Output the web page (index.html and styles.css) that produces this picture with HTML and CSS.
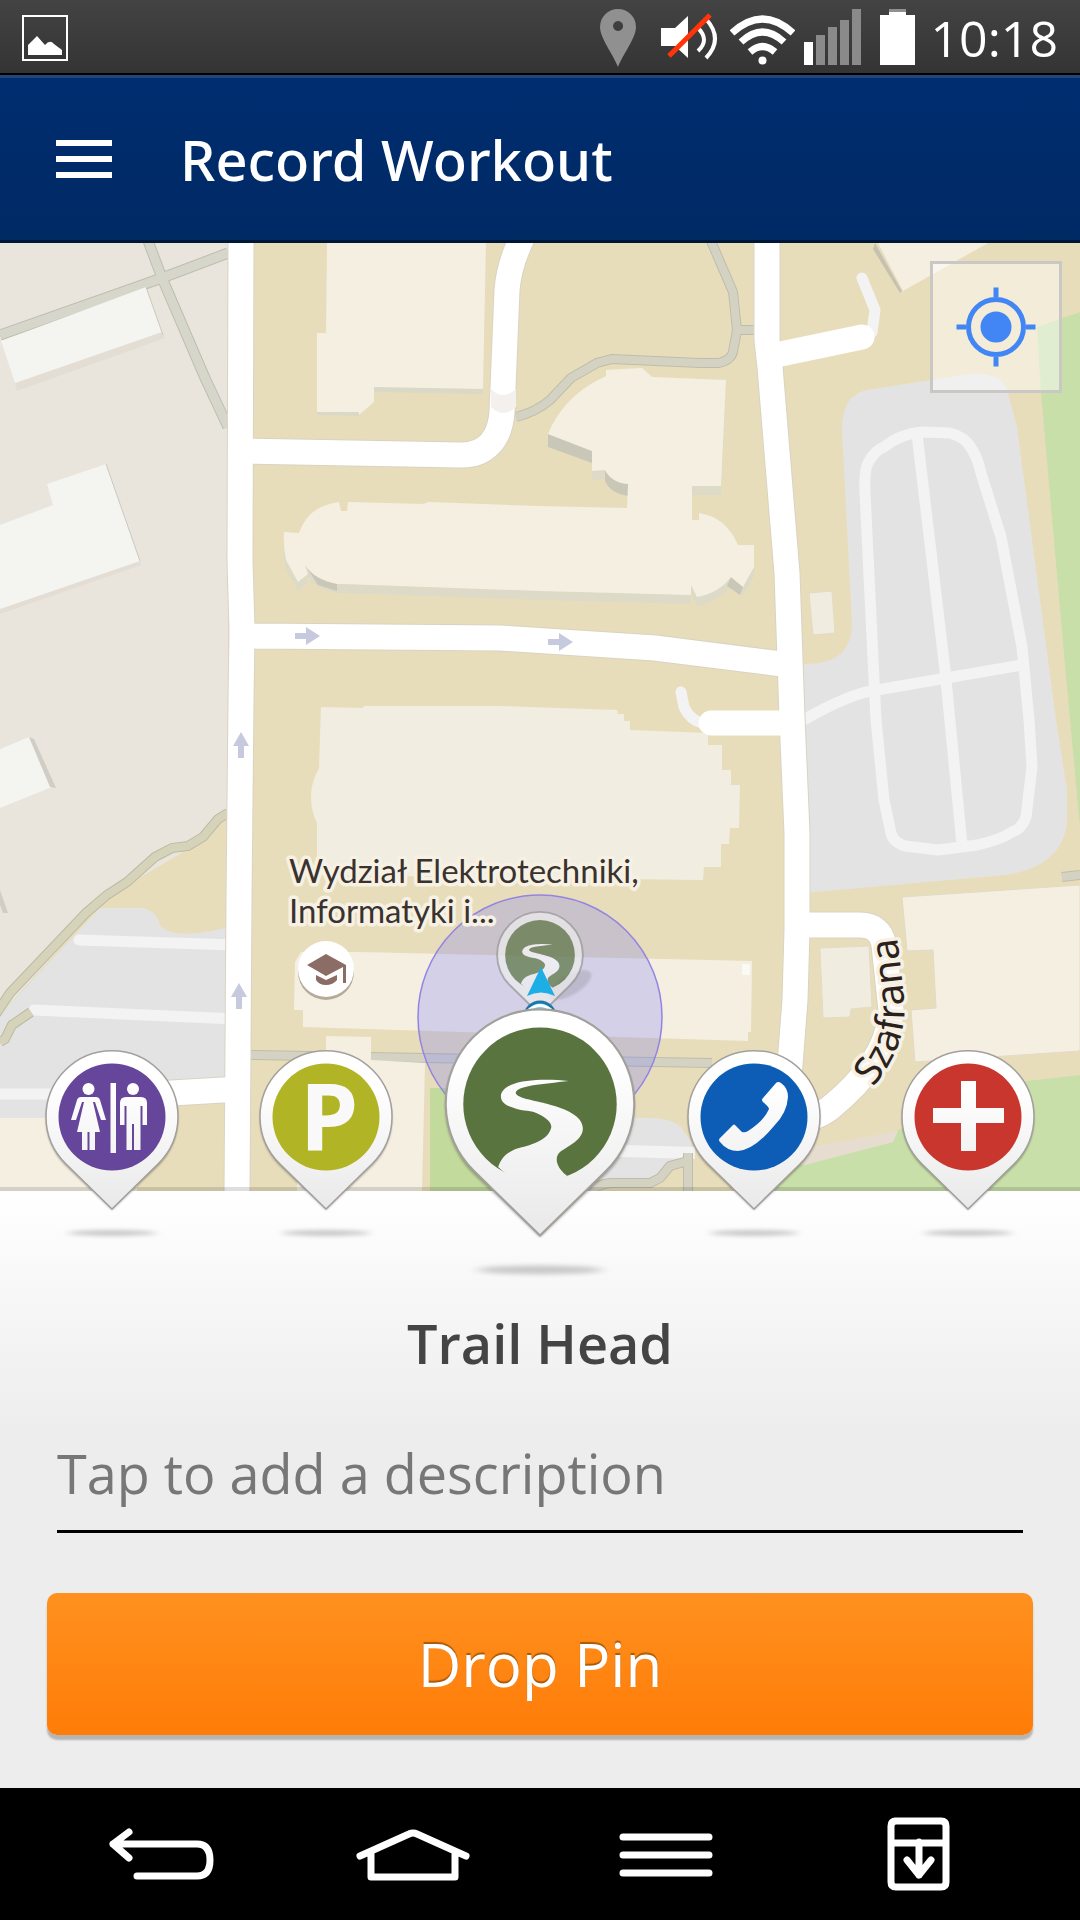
FILE: index.html
```html
<!DOCTYPE html>
<html lang="en">
<head>
<meta charset="utf-8">
<meta name="viewport" content="width=device-width, initial-scale=1">
<title>Record Workout</title>
<link rel="stylesheet" href="styles.css">
</head>
<body>
<div class="status-bar">
  <svg class="status-icon" width="46" height="75" viewBox="22 0 46 75" aria-hidden="true">
    <rect x="23" y="16" width="44" height="44" fill="none" stroke="#fff" stroke-width="2"/>
    <path d="M28 55V45l9-9 8 9q5-6 9-1l8 6v5z" fill="#fff"/>
  </svg>
  <div class="status-right">
    <svg class="status-icon" width="52" height="75" viewBox="600 0 52 75" aria-hidden="true">
      <path fill-rule="evenodd" fill="#909090" d="M618 9a18 18 0 0 1 18 18c0 11-13 27-18 40c-5-13-18-29-18-40a18 18 0 0 1 18-18zm0 12a5 5 0 1 0 .1 0z"/>
    </svg>
    <svg class="status-icon" width="60" height="75" viewBox="661 0 60 75" aria-hidden="true">
      <path d="M661 28h14l13-12v42l-13-12h-14z" fill="#fff"/>
      <path d="M698 28q12 12 0 23M706 19q18 20 0 39" fill="none" stroke="#fff" stroke-width="4"/>
      <path d="M669 56l41-41" stroke="#ff3408" stroke-width="5"/>
    </svg>
    <svg class="status-icon" width="65" height="75" viewBox="730 0 65 75" aria-hidden="true">
      <g fill="none" stroke="#fff" stroke-width="7">
        <path d="M732 33q30.500-28 61 0M741 42q21.500-20 43 0M750 52q12.500-11 25 0"/>
      </g>
      <circle cx="762.500" cy="60.500" r="4" fill="#fff"/>
    </svg>
    <svg class="status-icon" width="67" height="75" viewBox="804 0 67 75" aria-hidden="true">
      <path d="M804 42h9v23h-9z" fill="#fff"/>
      <path d="M816 35h9v30h-9zM828 27h9v38h-9zM840 20h9v45h-9zM852 9h9v56h-9z" fill="#8a8a8a"/>
    </svg>
    <svg class="status-icon" width="42" height="75" viewBox="880 0 42 75" aria-hidden="true">
      <path d="M889 9h17v4h-17z" fill="#909090"/>
      <path d="M880 15h9v-3h17v3h9v50h-35z" fill="#fff"/>
    </svg>
    <span class="clock">10:18</span>
  </div>
</div>

<header class="app-bar">
  <button class="menu-button" type="button" aria-label="Open menu">
    <svg width="56" height="38" viewBox="0 0 56 38" aria-hidden="true"><path d="M0 0h56v6H0zM0 16h56v6H0zM0 32h56v6H0z" fill="#fff"/></svg>
  </button>
  <h1 class="app-title">Record Workout</h1>
</header>

<main class="content">
  <section class="map" aria-label="Map">
    <svg class="map-canvas" viewBox="0 243 1080 948" preserveAspectRatio="xMidYMid slice">
      <defs>
        <linearGradient id="pinFill" gradientUnits="userSpaceOnUse" x1="0" y1="-30" x2="0" y2="92">
          <stop offset="0" stop-color="#fff"/><stop offset="1" stop-color="#e9e9e9"/>
        </linearGradient>
        <filter id="soft" x="-30%" y="-200%" width="160%" height="500%"><feGaussianBlur stdDeviation="5 2"/></filter>
        <filter id="edge" x="-20%" y="-20%" width="140%" height="140%"><feGaussianBlur stdDeviation="1"/></filter>
        <symbol id="pin" viewBox="-70 -70 140 200">
          <path d="M-47 48A66 66 0 1 1 47 48L0 93z" fill="#000" opacity=".35" filter="url(#edge)"/>
          <path d="M-46 47A66 66 0 1 1 46 47L0 92z" fill="url(#pinFill)" stroke="#a3a09c" stroke-width="1.500"/>
        </symbol>
        <g id="trail">
          <circle r="53.700" fill="#5a7440"/>
          <path fill="url(#pinFill)" d="M20-16.200C5-18-12-17-19-14C-30-10-30-1-20 2C-14 5-8 4-3 6C4 9 9 13 7.700 17C5 26-8 29-16 31C-24 34-27 38-29.300 44L0 70L18.800 50C11 44 10 37 14 33.500C20 29 30 25 30 17C30 8 17 3 7 .4C0-2-17-4-17-8C-16-13 2-14 20-16.200z"/>
        </g>
        <path id="hall" d="M606 370L642 368L652 377L726 380L721 486H692V520H699V513Q726 517 738 545H754V567L743 587L731 577Q719 593 697 597L691 585V595L540 591L344 584H337Q315 580 305 565L308 574L298 582L286 560Q283 545 284 532L299 533Q308 506 339 502L341 511H347L348 502L424 504L428 502L456 503L538 506L627 508L628 484Q612 483 605 470L592 471V451L548 434Q564 395 606 376z"/>
      </defs>

      <rect y="243" width="1080" height="948" fill="#e8ddbb"/>
      <path d="M0 243H228V815L190 848L105 898L0 1015z" fill="#e9e5dd"/>

      <!-- campus paths, upper left -->
      <g fill="none" stroke="#bdbdb0" stroke-width="11"><path d="M0 335L162 278L228 253M147 238L162 278L205 378L228 427"/></g>
      <g fill="none" stroke="#d6d6cb" stroke-width="9"><path d="M0 335L162 278L228 253M147 238L162 278L205 378L228 427"/></g>
      <path d="M15 383L162 332L165 338L17 391zM0 609L140 561L141 565L0 614z" fill="#e3ddd3"/>
      <path d="M1 341L146 287L162 332L15 383zM0 525L53 505L47 484L106 464L140 561L0 609zM0 749L29 737L52 787L0 808z" fill="#f4f4f0"/>
      <path d="M106 464L140 561M146 287L163 335" stroke="#cbc8c0" fill="none"/>
      <path d="M29 737L34 739L56 788L50 787zM0 890L8 913H3L0 905z" fill="#d0cdc5"/>

      <!-- car park, lower left -->
      <path d="M100 908L142 908Q156 910 160 925Q172 941 225 928V1077L225 1118H0V1015z" fill="#e3e3e3"/>
      <path d="M0 1118H137V1191H0z" fill="#f5efe2"/>
      <path d="M137 1100H225V1191H137z" fill="#e8ddbb"/>
      <g fill="none" stroke="#f3f3f3" stroke-width="11" stroke-linecap="round"><path d="M79 940L235 945M34 1010L235 1019M0 1094H90"/></g>
      <g fill="none" stroke="#bdbaa0" stroke-width="10"><path d="M228 813L218 819L203 837L188 846L172 848L155 857L127 882L107 895L86 913L10 993L-4 1014M31 1012L12 1025L5 1039L0 1042"/></g>
      <g fill="none" stroke="#d6d3bb" stroke-width="8"><path d="M228 813L218 819L203 837L188 846L172 848L155 857L127 882L107 895L86 913L10 993L-4 1014M31 1012L12 1025L5 1039L0 1042"/></g>

      <!-- right hand side areas -->
      <path d="M1080 312L1037 327L1041 393L1063 643L1070 720L1080 827zM1080 1075L1000 1084L898 1130L893 1142L800 1165L740 1191H1080z" fill="#c9dfa9"/>
      <path d="M812 1147L898 1131L893 1142L805 1165L790 1163z" fill="#e6ddd0"/>
      <path d="M804 664Q852 665 852 623L842 430Q842 395 867 390L970 374Q1003 372 1008 393L1017 427L1056 720L1067 790V823Q1062 867 1005 875L804 893z" fill="#e3e3e3"/>
      <g fill="none" stroke="#f3f3f3" stroke-width="11" stroke-linejoin="round">
        <path d="M876 720L865 493Q864 470 868 463Q875 450 884 447Q900 434 922 432L950 433Q964 437 969 445Q977 455 981 473L1001 537L1022 647L1029 720L1032 767L1026 817Q1022 829 1012 832Q1000 840 977 845L938 850L905 846Q893 842 891 833L884 800zM917 434L945 670L962 845M1022 665L877 690Q850 693 800 722"/>
      </g>
      <path d="M430 1088H500V1191H430z" fill="#c2da9b"/>
      <path d="M600 1120Q670 1113 681 1127L692 1143V1160L678 1162L660 1177L600 1182z" fill="#e3e3e3"/>
      <path d="M590 1150L695 1153" stroke="#f3f3f3" stroke-width="12"/>
      <g fill="none" stroke="#bfbda9" stroke-width="10"><path d="M588 1193Q595 1185 610 1183H650L660 1178L670 1166L688 1161M688 1153V1191M516 417Q536 412 550 400L571 378L597 363L612 359L700 363L719 363Q731 360 733 352L737 330L733 292L711 241M737 330H757M251 1055L712 1063M1062 877L1080 875"/></g>
      <g fill="none" stroke="#d4d3c3" stroke-width="8"><path d="M588 1193Q595 1185 610 1183H650L660 1178L670 1166L688 1161M688 1153V1191M516 417Q536 412 550 400L571 378L597 363L612 359L700 363L719 363Q731 360 733 352L737 330L733 292L711 241M737 330H757M251 1055L712 1063M1062 877L1080 875"/></g>

      <!-- buildings -->
      <path d="M327 243H486L483 394L374 392L359 416L317 415V333H326z" fill="#dad8c7"/>
      <path d="M327 243H486L483 389L374 387V402L359 415V412H317V333H326z" fill="#f5efe2"/>
      <use href="#hall" y="9" fill="#dddac8"/>
      <path d="M548 434L592 451V463L548 447zM605 470Q612 483 628 484V496Q610 493 605 481zM305 565Q315 580 337 583V591L318 585zM731 577L743 587L740 595L727 586z" fill="#c9c7b8"/>
      <use href="#hall" fill="#f5efe2"/>
      <path d="M875 243L902 291L900 293L873 249z" fill="#c6c2b1"/>
      <path d="M878 243H988L903 291z" fill="#f5efe2"/>
      <path d="M809 593L832 591L835 633L813 635zM820 948L869 946L872 1007L851 1009L850 1017L823 1018z" fill="#f0ecdf" stroke="#e3dbc4" stroke-width="1"/>
      <path d="M321 707L363 708L364 706L500 706L617 710L618 714H624V721H630V730L708 733V745H722V770H731V785H740L739 828H730L729 844H721V867H704L703 880L317 875V823Q304 795 319 768z" fill="#f1ede0"/>
      <path d="M301 952H358L752 961L751 1032H748V1041L303 1027V1010H294L295 962zM326 1036L371 1037V1060L425 1063L422 1191H297V1060H326z" fill="#f5efe2"/>
      <path d="M742 964h8v11h-8z" fill="#fbf9f3"/>
      <path d="M902 897L1080 885V1051L915 1062L911 1010L936 1008L933 950L907 951z" fill="#f5efe2" stroke="#e2dac6"/>

      <!-- roads -->
      <g fill="none" stroke="#f3f3f3" stroke-width="11" stroke-linecap="round" stroke-linejoin="round"><path d="M862 278L875 310L872 332M681 692L684 707Q690 720 702 723"/></g>
      <g fill="none" stroke="#d9d3c2" stroke-width="27"><path d="M241 241L240 560L242 630L241 700L239 900L237 1193M240 451L460 455C485 456 500 440 502 412L507 290Q509 265 522 238M240 636L500 638L655 648L790 665M767 241V340L770 367L787 573L792 717L797 833V930L795 1000L788 1090M797 925H860Q880 925 884 945L891 1010Q889 1060 830 1108Q815 1120 780 1125M240 1089L120 1096"/></g>
      <g fill="none" stroke="#fff" stroke-width="25">
        <path stroke-linecap="round" d="M776 355L862 337M711 723H790"/>
        <path d="M241 241L240 560L242 630L241 700L239 900L237 1193M240 451L460 455C485 456 500 440 502 412L507 290Q509 265 522 238M240 636L500 638L655 648L790 665M767 241V340L770 367L787 573L792 717L797 833V930L795 1000L788 1090M797 925H860Q880 925 884 945L891 1010Q889 1060 830 1108Q815 1120 780 1125M240 1089L120 1096"/>
      </g>
      <path d="M491 389Q503 401 516 389V407Q503 419 491 407z" fill="#f4f0ed"/>
      <g fill="#c7c9de">
        <path id="lane" d="M295 633h11v-6l14 9l-14 9v-6h-11z"/>
        <use href="#lane" x="253" y="6"/>
        <path id="lane-up" d="M238 758v-12h-5l8-14l8 14h-5v12z"/>
        <use href="#lane-up" x="-2" y="251"/>
      </g>

      <!-- point of interest -->
      <circle cx="326" cy="972" r="28" fill="#b5ab98"/>
      <circle cx="326" cy="969" r="28" fill="#fff"/>
      <path d="M326 954l20 11v18h-3v-16l-17 9l-19-11zM316 975l10 5l11-5v5q-4 5-11 5t-10-5z" fill="#8c6d66"/>

      <!-- current position -->
      <circle cx="540" cy="1017" r="122" fill="#7173fa" fill-opacity=".25" stroke="#9384e2" stroke-width="1.500"/>
      <g class="map-label">
        <text x="289" y="883">Wydział Elektrotechniki,</text>
        <text x="289" y="923">Informatyki i...</text>
      </g>
      <ellipse cx="570" cy="985" rx="24" ry="10" transform="rotate(-30 570 985)" fill="#777" opacity=".25" filter="url(#edge)"/>
      <g transform="translate(540 955) scale(.65)" opacity=".7">
        <path d="M-46 47A66 66 0 1 1 46 47L0 92z" fill="#eee" stroke="#999" stroke-width="3"/>
        <use href="#trail"/>
      </g>
      <circle cx="540" cy="1017" r="15" fill="#6fd0ee" stroke="#1c78a8" stroke-width="3"/>
      <path d="M529 1010q11-9 22 0" fill="none" stroke="#fff" stroke-width="3"/>
      <path d="M541 967L555 996Q541 989 527 996z" fill="#1eaee6"/>

      <path id="szafrana" d="M873 1087Q908 1045 904 1000Q901 965 893 910" fill="none"/>
      <text class="street-label"><textPath href="#szafrana">Szafrana</textPath></text>
      <path d="M0 1189H1080" stroke="#000" stroke-opacity=".13" stroke-width="4"/>
    </svg>
    <button class="locate-button" type="button" aria-label="My location">
      <svg width="80" height="80" viewBox="-40 -40 80 80" aria-hidden="true">
        <circle r="15.500" fill="#4285f4"/>
        <circle r="27.500" fill="none" stroke="#4285f4" stroke-width="5"/>
        <path d="M0-39.500V-30M0 30V39.500M-39.500 0H-30M30 0H39.500" stroke="#4285f4" stroke-width="5"/>
      </svg>
    </button>
  </section>

  <form class="pin-form">
    <div class="pin-picker" role="group" aria-label="Pin type">
      <button class="pin-option" type="button" aria-label="Restroom">
        <svg class="pin-art" viewBox="-70 -70 140 200" aria-hidden="true">
          <ellipse cy="116" rx="44" ry="3" fill="#000" opacity=".2" filter="url(#soft)"/>
          <use href="#pin" x="-70" y="-70" width="140" height="200"/>
          <circle r="53.500" fill="#65469a"/>
          <g fill="url(#pinFill)">
            <circle cx="-23.500" cy="-28" r="6"/>
            <path d="M-31-20H-16Q-13-20-12-17L-6 3H-11L-17-15H-19L-12 15H-17V33H-22.500V15H-24.500V33H-30V15H-35L-28-15H-30L-36 3H-41L-35-17Q-34-20-31-20z"/>
            <path d="M-1.500-34H4V36H-1.500z"/>
            <circle cx="21" cy="-28" r="6"/>
            <path d="M14-20H29Q35-20 35-14V8H30.500V-11H28.500V33H22V7H20V33H14.500V-11H12.500V8H8V-14Q8-20 14-20z"/>
          </g>
        </svg>
      </button>
      <button class="pin-option" type="button" aria-label="Parking">
        <svg class="pin-art" viewBox="-70 -70 140 200">
          <ellipse cy="116" rx="44" ry="3" fill="#000" opacity=".2" filter="url(#soft)"/>
          <use href="#pin" x="-70" y="-70" width="140" height="200"/>
          <circle r="53.500" fill="#b1b424"/>
          <text class="parking-letter" x="3" y="34">P</text>
        </svg>
      </button>
      <button class="pin-option pin-option-selected" type="button" aria-label="Trail Head" aria-pressed="true">
        <svg class="pin-art" viewBox="-70 -70 140 200" aria-hidden="true">
          <ellipse cy="116" rx="44" ry="3" fill="#000" opacity=".2" filter="url(#soft)"/>
          <use href="#pin" x="-70" y="-70" width="140" height="200"/>
          <use href="#trail"/>
        </svg>
      </button>
      <button class="pin-option" type="button" aria-label="Phone">
        <svg class="pin-art" viewBox="-70 -70 140 200" aria-hidden="true">
          <ellipse cy="116" rx="44" ry="3" fill="#000" opacity=".2" filter="url(#soft)"/>
          <use href="#pin" x="-70" y="-70" width="140" height="200"/>
          <circle r="53.500" fill="#0d5cb5"/>
          <path fill="url(#pinFill)" d="M22-34Q24-36 27-34Q34-29 34-20Q33-4 20 9Q0 33-16 34Q-27 34-34 25Q-36 23-34 21L-22 9Q-20 6-18 9L-12 15Q-9 16-6 14Q10 4 15-8Q15-10 9-15Q7-17 9-19z"/>
        </svg>
      </button>
      <button class="pin-option" type="button" aria-label="First aid">
        <svg class="pin-art" viewBox="-70 -70 140 200" aria-hidden="true">
          <ellipse cy="116" rx="44" ry="3" fill="#000" opacity=".2" filter="url(#soft)"/>
          <use href="#pin" x="-70" y="-70" width="140" height="200"/>
          <circle r="53.500" fill="#c9362d"/>
          <path fill="url(#pinFill)" d="M-7-36H8V-9H36V6H8V34H-7V6H-35V-9H-7z"/>
        </svg>
      </button>
    </div>
    <h2 class="pin-name">Trail Head</h2>
    <input class="description" type="text" aria-label="Description" placeholder="Tap to add a description">
    <button class="drop-button" type="button">Drop Pin</button>
  </form>
</main>

<nav class="nav-bar" aria-label="System">
  <button class="nav-button" type="button" aria-label="Back">
    <svg width="120" height="80" viewBox="-60 -40 120 80"><path d="M-32-22L-48-10L-32 4M-48-10H36Q49-10 49 6Q49 22 36 22H-24"/></svg>
  </button>
  <button class="nav-button" type="button" aria-label="Home">
    <svg width="120" height="80" viewBox="-60 -40 120 80"><path d="M-54 2L-5-20Q-1-22 3-20L52 2M-43-1V23H41V-1"/></svg>
  </button>
  <button class="nav-button" type="button" aria-label="Menu">
    <svg width="120" height="80" viewBox="-60 -40 120 80"><path d="M-43-17H43M-43 1H43M-43 19H43"/></svg>
  </button>
  <button class="nav-button" type="button" aria-label="Notifications">
    <svg width="120" height="80" viewBox="-60 -40 120 80"><path d="M-24-33H22Q27-33 27-28V28Q27 33 22 33H-23Q-28 33-28 28V-28Q-28-33-23-33M-27-11H27M0-12V21M-12 6L0 21L12 6"/></svg>
  </button>
</nav>
</body>
</html>
```
FILE: styles.css
```css
* {
  box-sizing: border-box;
}

body {
  margin: 0;
  min-height: 100vh;
  display: flex;
  flex-direction: column;
  background: #000;
  font-family: "Open Sans", "Noto Sans", sans-serif;
}

button {
  padding: 0;
  border: 0;
  background: none;
  font: inherit;
  cursor: pointer;
}

svg {
  display: block;
}

.status-bar {
  display: flex;
  justify-content: space-between;
  padding: 0 22px;
  height: 75px;
  background: linear-gradient(#434343, #343434);
  border-bottom: 2px solid #000;
}

.status-right {
  display: flex;
  gap: 9px;
}

.status-icon {
  flex: none;
}

.clock {
  color: #fff;
  font-size: 50px;
  line-height: 77px;
}

.app-bar {
  display: flex;
  align-items: center;
  gap: 68px;
  height: 168px;
  padding: 0 56px;
  background: linear-gradient(#002d70, #002a64);
  border-top: 3px solid #24457a;
  border-bottom: 3px solid #001637;
}

.app-title {
  margin: 0;
  color: #fff;
  font-family: "Noto Sans", "Open Sans", sans-serif;
  font-size: 56px;
  font-weight: 500;
  line-height: 72px;
}

.content {
  flex: 1;
  display: flex;
  flex-direction: column;
}

.map {
  position: relative;
  flex: 1;
  min-height: 600px;
  overflow: hidden;
}

.map-canvas {
  position: absolute;
  inset: 0;
  width: 100%;
  height: 100%;
}

.map-label,
.street-label {
  font-family: Lato, sans-serif;
  font-size: 33px;
  fill: #3a322e;
  stroke: #f7f1e4;
  stroke-width: 7px;
  stroke-linejoin: round;
  paint-order: stroke;
}

.street-label {
  font-family: "Noto Sans", sans-serif;
  font-size: 39px;
  fill: #2a211c;
}

.locate-button {
  position: absolute;
  top: 18px;
  right: 18px;
  display: grid;
  place-items: center;
  width: 132px;
  height: 132px;
  background: rgba(255, 255, 255, 0.45);
  border: 3px solid #c9c8c4;
}

.pin-form {
  display: flex;
  flex-direction: column;
  padding: 0 47px 53px;
  background: linear-gradient(#fff, #ededed 240px);
}

.pin-picker {
  position: relative;
  display: grid;
  grid-template-columns: repeat(5, 1fr);
  align-items: start;
  margin: -187px -42px 0;
}

.pin-option {
  display: flex;
  justify-content: center;
  padding-top: 43px;
}

.pin-option-selected {
  padding-top: 0;
}

.pin-art {
  flex: none;
  width: 140px;
  height: 200px;
}

.pin-option-selected .pin-art {
  width: 200px;
  height: 286px;
}

.parking-letter {
  font-family: "Open Sans", sans-serif;
  font-size: 94px;
  font-weight: 700;
  text-anchor: middle;
  fill: #f9f9f9;
}

.pin-name {
  margin: 17px 0 38px;
  color: #444;
  font-size: 54px;
  font-weight: 600;
  line-height: 72px;
  text-align: center;
}

.description {
  margin: 0 10px;
  height: 116px;
  padding: 0 0 2px;
  border: 0;
  border-bottom: 3px solid #000;
  border-radius: 0;
  background: none;
  color: #444;
  font: 54px "Open Sans", sans-serif;
  outline: none;
}

.description::placeholder {
  color: #777;
  opacity: 1;
}

.drop-button {
  margin-top: 60px;
  height: 142px;
  border-radius: 10px;
  background: linear-gradient(#ff911f, #ff7c08);
  box-shadow: 0 5px 2px #b5b5b3;
  color: #fff;
  font-size: 60px;
  text-shadow: 0 -2px 1px rgba(110, 60, 0, 0.6);
}

.nav-bar {
  display: grid;
  grid-template-columns: repeat(4, 1fr);
  height: 132px;
  padding: 0 35px;
  background: #000;
}

.nav-button {
  display: grid;
  place-items: center;
}

.nav-button path {
  fill: none;
  stroke: #fff;
  stroke-width: 7px;
  stroke-linecap: round;
  stroke-linejoin: round;
}
```
